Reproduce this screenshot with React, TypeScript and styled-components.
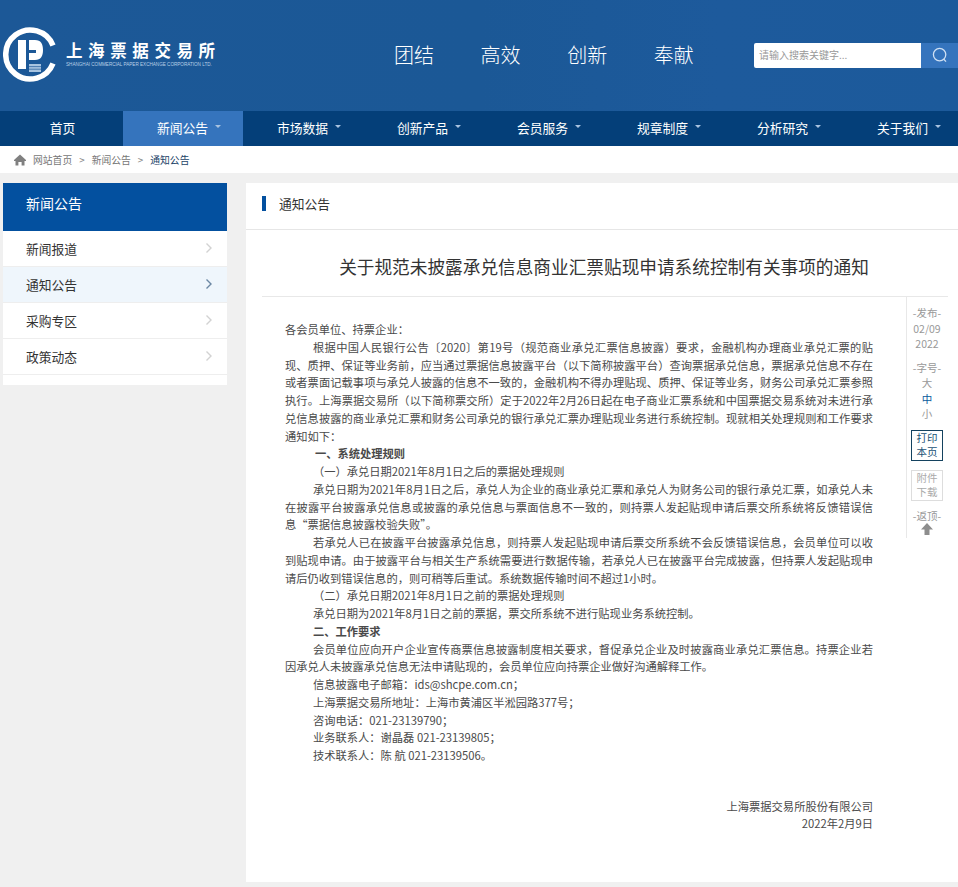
import React from "react";
import styled, { createGlobalStyle } from "styled-components";

const Global = createGlobalStyle`
  html, body { margin: 0; padding: 0; background: #f0f0f0; }
  body { font-family: "Noto Sans CJK SC", "Liberation Sans", sans-serif; width: 958px; height: 887px; overflow: hidden; }
  * { box-sizing: border-box; }
`;

const Page = styled.div`width: 958px; height: 887px; display: flex; flex-direction: column;`;

const Banner = styled.header`
  height: 111px; display: flex; align-items: center; flex-shrink: 0;
  background: linear-gradient(90deg, #1c5897 0%, #1b5896 50%, #1d5a9c 75%, #1c5a9b 100%);
`;
const Logo = styled.div`display: flex; align-items: center; width: 394px; padding: 0 0 0 3px; margin-top: -1px;`;
const LogoText = styled.div`margin-left: 7px; color: #fff; display: flex; flex-direction: column; margin-top: -4.4px;`;
const LogoCn = styled.div`font-size: 16.5px; line-height: 24px; font-weight: 700; letter-spacing: 5.6px; white-space: nowrap;`;
const LogoEn = styled.div`font-family: "Liberation Sans", sans-serif; font-size: 4.6px; line-height: 6px; color: #b9cfe6; white-space: nowrap;`;
const Mottos = styled.div`display: flex; gap: 46.6px; width: 360px; margin-top: -1px;`;
const Motto = styled.span`color: #fff; font-size: 20px; line-height: 28px; font-weight: 300;`;
const Search = styled.form`display: flex; width: 204px; height: 25px; margin-top: -1px;`;
const SearchInput = styled.input`
  width: 167px; height: 25px; border: 0; padding: 0 5px 2px; font: 400 10px "Noto Sans CJK SC", sans-serif; background: #fff; border-radius: 2px 0 0 2px;
  &::placeholder { color: #999; opacity: 1; }
`;
const SearchBtn = styled.button`width: 37px; height: 25px; border: 0; padding: 0; background: #3574bd; display: flex; align-items: center; justify-content: center; color: #cfe0f3;`;

const Nav = styled.nav`height: 35px; background: #043f79; display: flex; flex-shrink: 0;`;
const NavItem = styled.a<{ $active?: boolean; $first?: boolean }>`
  flex: 0 0 ${p => (p.$first ? 123 : 120)}px; height: 35px; display: flex; align-items: center; justify-content: center; gap: 7px;
  padding: 0 0 2px ${p => (p.$first ? 2 : 12)}px; color: #fff; font-size: 12.8px; background: ${p => (p.$active ? "#3574bd" : "transparent")};
`;
const Caret = styled.i`width: 0; height: 0; border-left: 3px solid transparent; border-right: 3px solid transparent; border-top: 3px solid #a9c3e0; margin-top: -2px;`;

const Crumbs = styled.div`height: 27px; flex-shrink: 0; background: #fff; display: flex; align-items: center; padding-left: 14px; font-size: 9.8px; color: #777;`;
const CrumbSep = styled.span`margin: 0 7px; color: #888;`;
const CrumbNow = styled.span`color: #1c4468;`;
const Home = styled.span`display: flex; margin-right: 7px; color: #808080;`;

const Content = styled.div`flex: 1; display: flex; padding: 10px 0 5px 3px; align-items: flex-start; gap: 19px;`;
const Side = styled.aside`width: 224px; height: 202px; background: #fff; flex-shrink: 0;`;
const SideHead = styled.div`height: 48px; background: #03509f; color: #fff; font-size: 14px; display: flex; align-items: center; padding: 0 0 8px 23px;`;
const SideItem = styled.a<{ $active?: boolean }>`
  height: 36px; display: flex; align-items: center; justify-content: space-between; padding: 0 14px 1px 23px; font-size: 12.75px; color: #333;
  background: ${p => (p.$active ? "#eff6fc" : "#fff")}; border-bottom: 1px solid #eeeeee;
`;
const Chevron = styled.svg<{ $active?: boolean }>`width: 8px; height: 12px; fill: none; stroke: ${p => (p.$active ? "#6b87a3" : "#d2d2d2")}; stroke-width: 1.4;`;

const Main = styled.main`width: 712px; height: 699px; background: #fff;`;
const MainHead = styled.div`height: 47px; border-bottom: 1px solid #e6e6e6; display: flex; align-items: center; padding: 0 0 5px 16px; font-size: 12.75px; color: #333;`;
const Mark = styled.i`width: 4px; height: 15px; background: #03509f; margin-right: 13px;`;
const Title = styled.h1`
  margin: 0 10px 0 16px; height: 67px; border-bottom: 1px solid #e8e8e8; font-size: 17.67px; font-weight: 400; color: #333;
  display: flex; align-items: center; justify-content: center; padding: 7px 2px 0 0; line-height: 24px; white-space: nowrap;
`;
const ArticleRow = styled.div`display: flex; align-items: flex-start; padding-left: 39px;`;
const Body = styled.article`flex: 0 0 588px; padding-top: 24px; font-size: 11.27px; line-height: 17.75px; color: #4a4a4a; text-align: justify;`;
const P = styled.p<{ $indent?: number }>`margin: 0; text-indent: ${p => p.$indent ?? 0}px;`;
const Strong = styled.b`font-weight: 700;`;
const Sign = styled.p`margin: 0; text-align: right; line-height: 17px;`;
const Signs = styled.div`margin-top: 33px;`;
const Rail = styled.div`flex: 0 0 42px; height: 241px; margin: 0 0 0 33px; border-left: 1px solid #e8e8e8; display: flex; flex-direction: column; align-items: center; padding: 8px 1px 0 0; font-size: 10.5px; color: #999; text-align: center; line-height: 15.5px;`;
const RailGroup = styled.div`margin-bottom: 8px;`;
const RailActive = styled.div`color: #0b5a9c;`;
const RailBox = styled.div<{ $on?: boolean }>`
  flex-shrink: 0; width: 32px; height: 31px; border: 1px solid ${p => (p.$on ? "#14425f" : "#dddddd")}; color: ${p => (p.$on ? "#1a5276" : "#aaa")};
  font-size: 10.5px; line-height: 14.5px; margin-bottom: 9px;
`;
const RailLabel = styled.div`margin-top: -2px; line-height: 15px;`;
const RailUp = styled.svg`flex-shrink: 0; width: 14px; height: 14px; fill: #8d8d8d; margin-top: -1px;`;

const navs = ["市场数据", "创新产品", "会员服务", "规章制度", "分析研究", "关于我们"];

export default function App() {
  return (
    <Page>
      <Global />
      <Banner>
        <Logo>
          <svg width="56" height="58" viewBox="0 0 56 58" aria-label="logo">
            <path d="M50 19.5 A24.5 24.5 0 1 0 50 37.5" fill="none" stroke="#fff" strokeWidth="5.5" />
            <rect x="15" y="14" width="8" height="29" fill="#fff" />
            <path d="M26 14H32C38 14 40 18 40 24C40 30 38 34 32 34H26V27H33V24H26Z" fill="#fff" />
            <rect x="26" y="38" width="12" height="8" fill="#a8c4e0" />
            <path d="M26 40.6h12M26 43.2h12" stroke="#1c5897" strokeWidth=".7" />
          </svg>
          <LogoText>
            <LogoCn>上海票据交易所</LogoCn>
            <LogoEn>SHANGHAI COMMERCIAL PAPER EXCHANGE CORPORATION LTD.</LogoEn>
          </LogoText>
        </Logo>
        <Mottos>
          {["团结", "高效", "创新", "奉献"].map(m => <Motto key={m}>{m}</Motto>)}
        </Mottos>
        <Search onSubmit={e => e.preventDefault()}>
          <SearchInput placeholder="请输入搜索关键字..." />
          <SearchBtn type="button" aria-label="搜索">
            <svg width="16" height="16" viewBox="0 0 16 16" fill="none" stroke="currentColor" strokeWidth="1.3">
              <circle cx="7.6" cy="7.6" r="6.2" />
              <path d="M11.8 12.2 14 14.6" />
            </svg>
          </SearchBtn>
        </Search>
      </Banner>
      <Nav>
        <NavItem $first>首页</NavItem>
        <NavItem $active>新闻公告<Caret /></NavItem>
        {navs.map(n => <NavItem key={n}>{n}<Caret /></NavItem>)}
      </Nav>
      <Crumbs>
        <Home>
          <svg width="12" height="12" viewBox="0 0 12 12" fill="currentColor">
            <path d="M6 .5 12 6v1H10.5v4.5H7.6V8H4.4v3.5H1.5V7H0V6z" />
          </svg>
        </Home>
        网站首页<CrumbSep>&gt;</CrumbSep>新闻公告<CrumbSep>&gt;</CrumbSep><CrumbNow>通知公告</CrumbNow>
      </Crumbs>
      <Content>
        <Side>
          <SideHead>新闻公告</SideHead>
          {["新闻报道", "通知公告", "采购专区", "政策动态"].map((s, i) => (
            <SideItem key={s} $active={i === 1}>
              {s}
              <Chevron $active={i === 1} viewBox="0 0 8 12"><path d="M1.5 1.5 6 6 1.5 10.5" /></Chevron>
            </SideItem>
          ))}
        </Side>
        <Main>
          <MainHead><Mark />通知公告</MainHead>
          <Title>关于规范未披露承兑信息商业汇票贴现申请系统控制有关事项的通知</Title>
          <ArticleRow>
            <Body>
              <P>各会员单位、持票企业：</P>
              <P $indent={28}>根据中国人民银行公告〔2020〕第19号（规范商业承兑汇票信息披露）要求，金融机构办理商业承兑汇票的贴现、质押、保证等业务前，应当通过票据信息披露平台（以下简称披露平台）查询票据承兑信息，票据承兑信息不存在或者票面记载事项与承兑人披露的信息不一致的，金融机构不得办理贴现、质押、保证等业务，财务公司承兑汇票参照执行。上海票据交易所（以下简称票交所）定于2022年2月26日起在电子商业汇票系统和中国票据交易系统对未进行承兑信息披露的商业承兑汇票和财务公司承兑的银行承兑汇票办理贴现业务进行系统控制。现就相关处理规则和工作要求通知如下：</P>
              <P $indent={30}><Strong>一、系统处理规则</Strong></P>
              <P $indent={28}>（一）承兑日期2021年8月1日之后的票据处理规则</P>
              <P $indent={28}>承兑日期为2021年8月1日之后，承兑人为企业的商业承兑汇票和承兑人为财务公司的银行承兑汇票，如承兑人未在披露平台披露承兑信息或披露的承兑信息与票面信息不一致的，则持票人发起贴现申请后票交所系统将反馈错误信息“票据信息披露校验失败”。</P>
              <P $indent={28}>若承兑人已在披露平台披露承兑信息，则持票人发起贴现申请后票交所系统不会反馈错误信息，会员单位可以收到贴现申请。由于披露平台与相关生产系统需要进行数据传输，若承兑人已在披露平台完成披露，但持票人发起贴现申请后仍收到错误信息的，则可稍等后重试。系统数据传输时间不超过1小时。</P>
              <P $indent={28}>（二）承兑日期2021年8月1日之前的票据处理规则</P>
              <P $indent={28}>承兑日期为2021年8月1日之前的票据，票交所系统不进行贴现业务系统控制。</P>
              <P $indent={28}><Strong>二、工作要求</Strong></P>
              <P $indent={28}>会员单位应向开户企业宣传商票信息披露制度相关要求，督促承兑企业及时披露商业承兑汇票信息。持票企业若因承兑人未披露承兑信息无法申请贴现的，会员单位应向持票企业做好沟通解释工作。</P>
              <P $indent={28}>信息披露电子邮箱：ids@shcpe.com.cn；</P>
              <P $indent={28}>上海票据交易所地址：上海市黄浦区半淞园路377号；</P>
              <P $indent={28}>咨询电话：021-23139790；</P>
              <P $indent={28}>业务联系人：谢晶磊 021-23139805；</P>
              <P $indent={28}>技术联系人：陈 航 021-23139506。</P>
              <Signs>
                <Sign>上海票据交易所股份有限公司</Sign>
                <Sign>2022年2月9日</Sign>
              </Signs>
            </Body>
            <Rail>
              <RailGroup>-发布-<br />02/09<br />2022</RailGroup>
              <RailGroup>-字号-<br />大<RailActive>中</RailActive>小</RailGroup>
              <RailBox $on>打印<br />本页</RailBox>
              <RailBox>附件<br />下载</RailBox>
              <RailLabel>-返顶-</RailLabel>
              <RailUp viewBox="0 0 14 14"><path d="M7 1 13 7.5H9.5V13H4.5V7.5H1z" /></RailUp>
            </Rail>
          </ArticleRow>
        </Main>
      </Content>
    </Page>
  );
}
